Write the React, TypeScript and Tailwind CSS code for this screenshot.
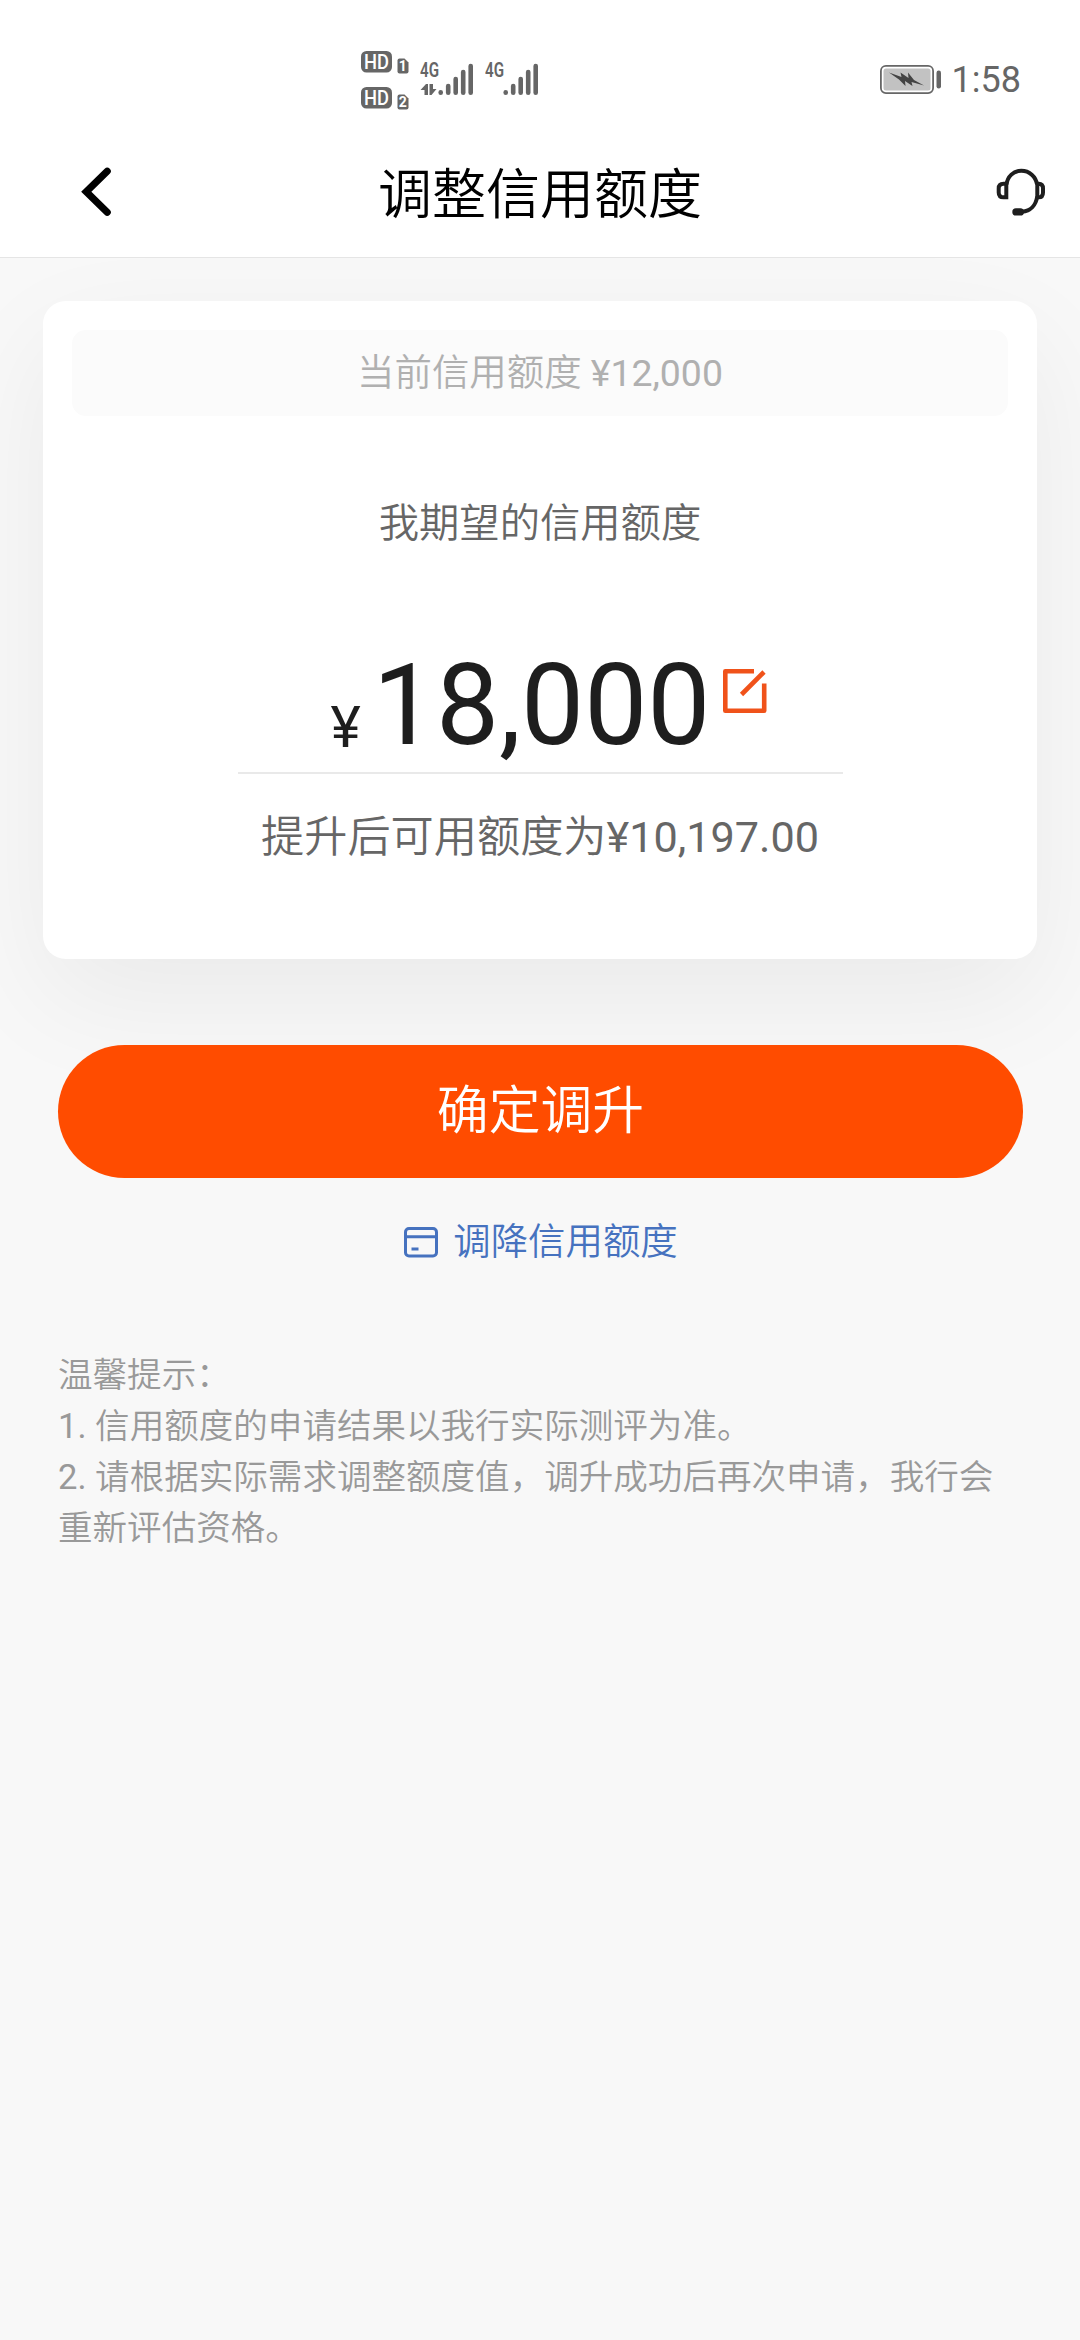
import React from 'react';

interface SimBadgeProps {
  slot: string;
}

// "HD" pill followed by the SIM card number
const SimBadge: React.FC<SimBadgeProps> = ({ slot }) => (
  <svg width="48" height="23" viewBox="0 0 48 23">
    <rect x="0" y="0" width="31" height="21.5" rx="5.5" fill="#666" />
    <text x="15.5" y="17.6" textAnchor="middle" fontSize="19.5" fontWeight="500" fill="#fff" textLength="25" lengthAdjust="spacingAndGlyphs">
      HD
    </text>
    <path d="M38.5 7.5h5l4 4v9a2 2 0 0 1-2 2h-7a2 2 0 0 1-2-2v-11a2 2 0 0 1 2-2z" fill="#666" />
    <text x="41.8" y="20" textAnchor="middle" fontSize="14" fontWeight="700" fill="#fff">
      {slot}
    </text>
  </svg>
);

interface SignalProps {
  withData?: boolean;
}

const Signal: React.FC<SignalProps> = ({ withData = false }) => (
  <svg width="54" height="42" viewBox="0 -8 54 42">
    <text x="0" y="14.8" fontSize="20" fontWeight="600" fill="#666" textLength="19" lengthAdjust="spacingAndGlyphs">
      4G
    </text>
    {withData && (
      <g fill="#666">
        <path d="M0.5 28 6 22h2v11H4.5v-5z" />
        <path d="M9.5 22H13v5h3.5L11.5 33h-2z" />
      </g>
    )}
    <g stroke="#666" strokeWidth="4.6" strokeLinecap="round">
      <path d="M20.7 30.3v.4" />
      <path d="M28.2 24v6.7" />
      <path d="M35.7 17v13.7" />
      <path d="M43.2 10v20.7" />
      <path d="M50.7 4v26.7" />
    </g>
  </svg>
);

const Battery: React.FC = () => (
  <svg width="62" height="30" viewBox="0 0 62 30">
    <rect x="0.9" y="0.9" width="52.2" height="27.2" rx="5" fill="#fff" stroke="#666" strokeWidth="1.8" />
    <rect x="3.5" y="3.5" width="47" height="22" rx="2.5" fill="#c2c2c2" />
    <path d="M9 7.5 21.5 12 20.5 7.5 28.5 13 28 7.5 34 15 44 20.5 31.5 17 32.5 21 25 16 25.5 21 19 14.5z" fill="#444" />
    <rect x="56.5" y="5.5" width="4.5" height="18" rx="2.2" fill="#666" />
  </svg>
);

const StatusBar: React.FC = () => (
  <div className="flex h-[132px] items-start pl-[361px] pr-[59px]">
    <div className="mt-[51px] flex flex-col gap-[13px]">
      <SimBadge slot="1" />
      <SimBadge slot="2" />
    </div>
    <div className="ml-[11px] mt-[54px] flex gap-[11px]">
      <Signal withData />
      <Signal />
    </div>
    <div className="ml-auto mt-[60px] flex items-center gap-[10px]">
      <Battery />
      <span className="text-[36px] font-normal leading-[40px] text-[#666]">1:58</span>
    </div>
  </div>
);

const HeadsetIcon: React.FC = () => (
  <svg width="52" height="52" viewBox="0 0 52 52" fill="none" stroke="#1e1e1e" strokeWidth="4">
    <path d="M10.3 29.2V15.7H7.5Q2.7 15.7 2.7 20.5V24.4Q2.7 29.2 7.5 29.2Z" />
    <path d="M41.3 29.2V15.7H42.7Q47 15.7 47 20.5V24.4Q47 29.2 42.7 29.2Z" />
    <path d="M10.5 16.5C11.5 8.5 17.5 2.8 25.3 2.8C33.5 2.8 39.8 8.5 41.1 16.5" />
    <path d="M41.2 28.5C40 37 34.5 43 26 43.7" />
    <rect x="16.3" y="40.2" width="11.7" height="7.4" rx="3.7" fill="#1e1e1e" stroke="none" />
  </svg>
);

const Header: React.FC = () => (
  <header className="flex h-[126px] items-start justify-between border-b border-[#e5e5e5] pl-[78px] pr-[32px]">
    <button type="button" className="mt-[33px]">
      <svg width="52" height="54" viewBox="0 0 52 54" fill="none" stroke="#000" strokeWidth="7.2" strokeLinecap="round">
        <path d="M29.2 6.2 8.3 26.7l20.9 20.5" />
      </svg>
    </button>
    <h1 className="ml-[-46px] mt-[30px] text-[54px] font-[350] leading-[68px] text-black">调整信用额度</h1>
    <button type="button" className="mt-[36px]">
      <HeadsetIcon />
    </button>
  </header>
);

const EditIcon: React.FC = () => (
  <svg width="46" height="46" viewBox="0 0 46 46" fill="none" stroke="#f0521a" strokeWidth="4.6">
    <path d="M32 3.3H3.3V42.7H42.2V15.5" strokeLinejoin="round" />
    <path d="M19.5 26.5 42 4" />
  </svg>
);

const LimitCard: React.FC = () => (
  <section className="mx-[43px] mt-[43px] flex h-[658px] flex-col items-center rounded-[23px] bg-white p-[29px] shadow-[0_40px_115px_rgba(0,0,0,0.06)]">
    <div className="flex h-[86px] w-full items-center justify-center rounded-[14px] bg-[#fbfbfb] text-[37.44px] leading-[50px] text-[#b0b0b0]">
      <p>
        当前信用额度 <span className="font-normal">¥12,000</span>
      </p>
    </div>
    <p className="mt-[78px] text-[40.32px] leading-[60px] text-[#666]">我期望的信用额度</p>
    <div className="mt-[93px] flex h-[127px] w-[605px] items-start border-b-2 border-[#e9e9e9] pl-[93px] font-normal text-[#1e1e1e]">
      <span className="mt-[43px] text-[57.6px] leading-[76px]">¥</span>
      <span className="ml-[12px] mt-px text-[112.32px] leading-[116px]">18,000</span>
      <span className="ml-[12px] mt-[21px]">
        <EditIcon />
      </span>
    </div>
    <p className="mt-[34px] text-[43.2px] leading-[60px] text-[#666]">
      提升后可用额度为<span className="font-normal">¥10,197.00</span>
    </p>
  </section>
);

const App: React.FC = () => {
  return (
    <div className="min-h-[2340px] w-[1080px] overflow-hidden bg-[#f8f8f8] font-['Roboto','Noto_Sans_CJK_SC',sans-serif] font-[350]">
      <div className="bg-white">
        <StatusBar />
        <Header />
      </div>

      <main>
        <LimitCard />

        <button
          type="button"
          className="relative mx-[58px] mt-[86px] flex h-[133px] w-[965px] items-center justify-center rounded-full bg-[#ff4c00] text-[51.84px] text-white"
        >
          确定调升
        </button>

        <a className="mt-[34px] flex items-center justify-center gap-[15px] pl-[2px] text-[37.44px] leading-[60px] text-[#4672bf]">
          <svg width="34" height="31" viewBox="0 0 34 31" fill="none" stroke="currentColor" strokeWidth="3">
            <rect x="1.5" y="1.5" width="31" height="27.5" rx="3.5" />
            <path d="M1.5 9.8h31M7.5 22h7" />
          </svg>
          调降信用额度
        </a>

        <div className="ml-[58px] mt-[78px] w-[965px] text-[34.56px] leading-[51px] text-[#999]">
          <p>温馨提示：</p>
          <p>
            <span className="font-normal">1. </span>信用额度的申请结果以我行实际测评为准。
          </p>
          <p>
            <span className="font-normal">2. </span>请根据实际需求调整额度值，调升成功后再次申请，我行会重新评估资格。
          </p>
        </div>
      </main>
    </div>
  );
};

export default App;
